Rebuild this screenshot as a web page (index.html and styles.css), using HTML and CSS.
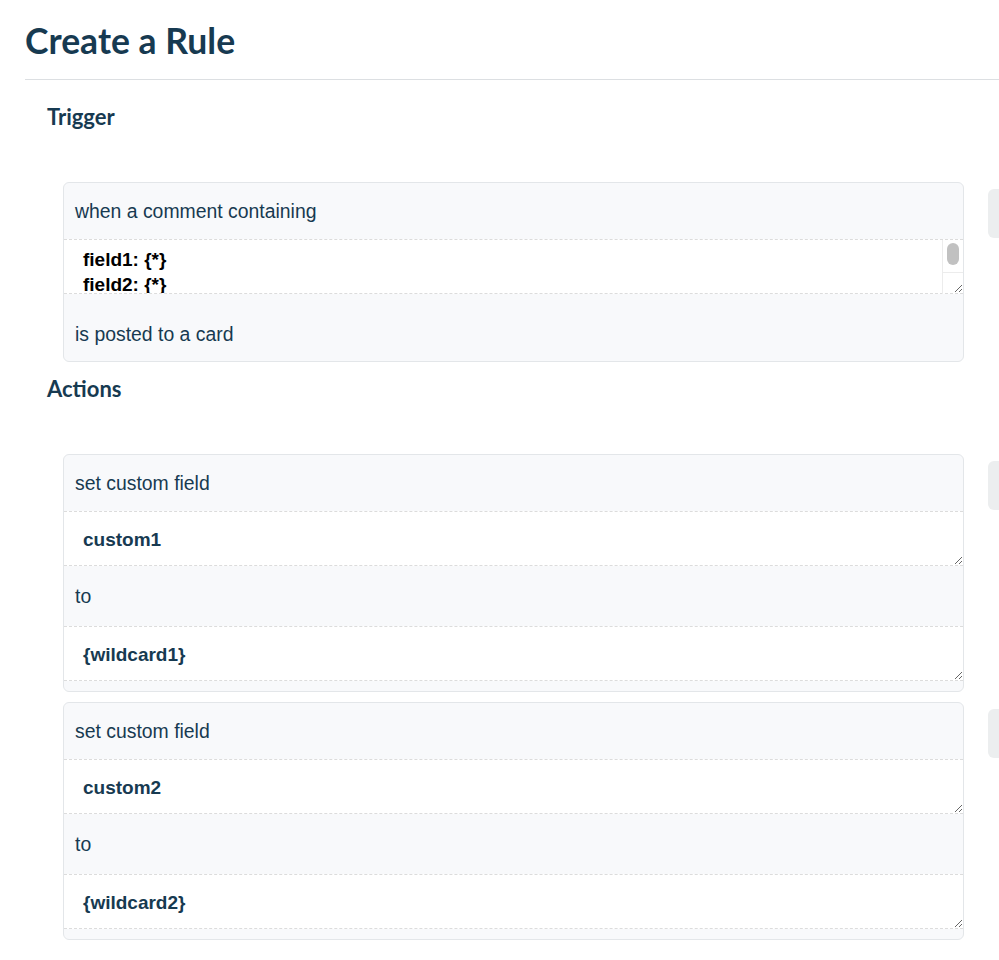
FILE: index.html
```html
<!DOCTYPE html>
<html lang="en">
  <head>
    <meta charset="utf-8" />
    <title>Create a Rule</title>
    <link rel="stylesheet" href="styles.css">
  </head>
  <body>
    <main class="page">
      <header class="page-header">
        <h1 class="page-title">Create a Rule</h1>
      </header>

      <section class="section">
        <h2 class="section-title">Trigger</h2>
        <div class="rule-row">
          <div class="rule-card">
            <div class="rule-label">when a comment containing</div>
            <div class="rule-field">
              <textarea class="rule-input rule-input--trigger">field1: {*}
field2: {*}
field3: {*}</textarea>
              <!-- scrollbar drawn by hand, the headless browser hides native ones -->
              <div class="scrollbar"><span class="scrollbar-thumb"></span></div>
              <div class="scrollbar-corner"></div>
            </div>
            <div class="rule-label rule-label--end">is posted to a card</div>
          </div>
          <div class="rule-side"></div>
        </div>
      </section>

      <section class="section">
        <h2 class="section-title">Actions</h2>
        <div class="rule-row">
          <div class="rule-card rule-card--action">
            <div class="rule-label">set custom field</div>
            <textarea class="rule-input">custom1</textarea>
            <div class="rule-label rule-label--mid">to</div>
            <textarea class="rule-input">{wildcard1}</textarea>
          </div>
          <div class="rule-side"></div>
        </div>
        <div class="rule-row">
          <div class="rule-card rule-card--action">
            <div class="rule-label">set custom field</div>
            <textarea class="rule-input">custom2</textarea>
            <div class="rule-label rule-label--mid">to</div>
            <textarea class="rule-input">{wildcard2}</textarea>
          </div>
          <div class="rule-side"></div>
        </div>
      </section>
    </main>
  </body>
</html>
```

FILE: styles.css
```css
html, body {
  margin: 0;
  overflow: hidden;
}

body {
  font-family: "Liberation Sans", Arial, sans-serif;
  background: #fff;
  color: #173a51;
}

.page {
  padding-left: 25px;
}

.page-header {
  border-bottom: 1px solid #dcdfe2;
  margin-bottom: 24px;
}

.page-title {
  font-family: Lato, sans-serif;
  font-weight: 700;
  font-size: 35.5px;
  line-height: 44px;
  margin: 0;
  padding: 19px 0 16px;
  color: #173a51;
}

.section + .section {
  margin-top: 14px;
}

.section-title {
  font-family: Lato, sans-serif;
  font-weight: 700;
  font-size: 22px;
  line-height: 26px;
  margin: 0 0 52px 22px;
  color: #173a51;
}

.rule-row {
  display: flex;
  align-items: flex-start;
  gap: 24px;
  margin-left: 38px;
}

.rule-row + .rule-row {
  margin-top: 10px;
}

.rule-card {
  width: 901px;
  flex-shrink: 0;
  box-sizing: border-box;
  background: #f8f9fb;
  border: 1px solid #e3e6e9;
  border-radius: 6px;
  overflow: hidden;
}

.rule-card--action {
  padding-bottom: 10px;
}

.rule-label {
  font-size: 19.4px;
  line-height: 25px;
  padding: 16px 11px 15px;
}

.rule-label--mid {
  padding: 18px 11px 17px;
}

.rule-label--end {
  padding: 28px 11px 14px;
}

.rule-field {
  position: relative;
}

.rule-input {
  display: block;
  width: 100%;
  height: 55px;
  box-sizing: border-box;
  margin: 0;
  padding: 15px 19px 4px;
  border: none;
  border-top: 1px dashed #dcdcdc;
  border-bottom: 1px dashed #dcdcdc;
  background: #fff;
  font-family: "Liberation Sans", Arial, sans-serif;
  font-weight: 700;
  font-size: 19px;
  line-height: 25px;
  color: #173a51;
  resize: vertical;
  outline: none;
}

.rule-input--trigger {
  padding-top: 7px;
  color: #000;
  overflow: hidden;
}

.scrollbar {
  position: absolute;
  top: 1px;
  right: 0;
  width: 20px;
  height: 32px;
  background: #fff;
  border-left: 1px solid #ececec;
}

.scrollbar-thumb {
  position: absolute;
  top: 3px;
  left: 4px;
  width: 12px;
  height: 22px;
  border-radius: 6px;
  background: #c1c1c1;
}

.scrollbar-corner {
  position: absolute;
  top: 33px;
  right: 0;
  width: 20px;
  height: 21px;
  border-left: 1px solid #ececec;
  border-top: 1px solid #ececec;
}

.rule-side {
  flex-shrink: 0;
  width: 11px;
  height: 49px;
  margin-top: 7px;
  background: #eceeef;
  border-radius: 6px 0 0 6px;
}
```
